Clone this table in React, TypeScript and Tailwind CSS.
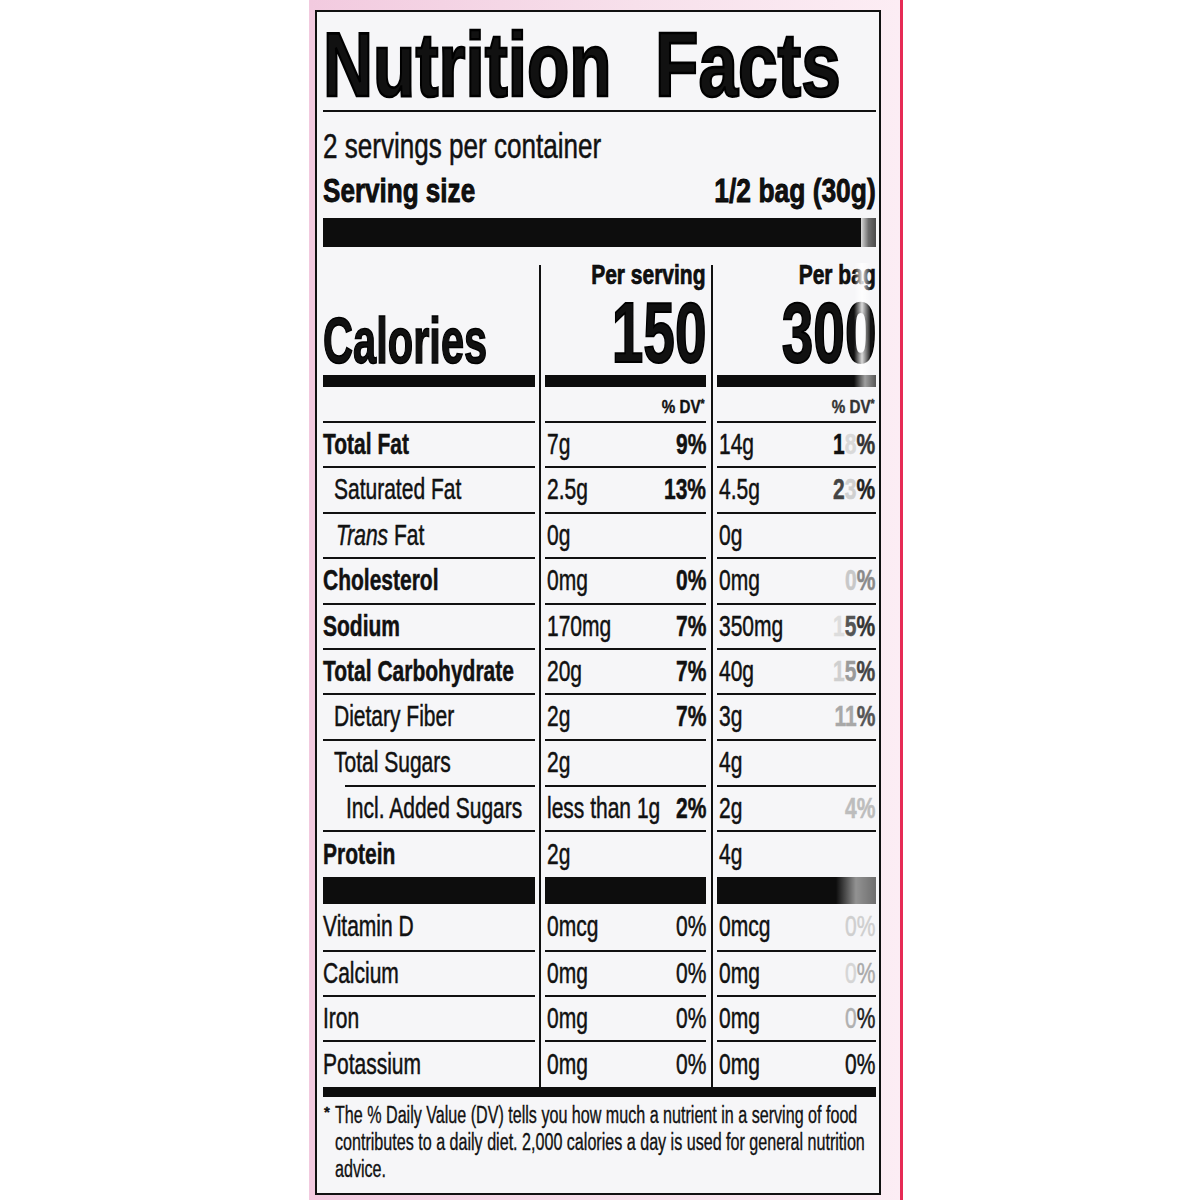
import React from "react";

type Part = [string, string];
interface Row {
  label: React.ReactNode;
  bold?: boolean;
  ind?: string;
  a: string;
  p?: string;
  b: string;
  q?: Part[];
  h: string;
  line?: boolean;
  lineInd?: string;
  pb?: boolean;
}

const K = "#111111";

const rows: Row[] = [
  { label: "Total Fat", bold: true, a: "7g", p: "9%", b: "14g", q: [["1", K], ["8", "#d9d9d9"], ["%", "#333333"]], h: "h-[45px]", line: true, pb: true },
  { label: "Saturated Fat", ind: "pl-[11px]", a: "2.5g", p: "13%", b: "4.5g", q: [["2", "#444444"], ["3", "#d0d0d0"], ["%", "#222222"]], h: "h-[46px]", line: true, pb: true },
  { label: (<><i>Trans</i> Fat</>), ind: "pl-[13px]", a: "0g", b: "0g", h: "h-[45px]", line: true },
  { label: "Cholesterol", bold: true, a: "0mg", p: "0%", b: "0mg", q: [["0", "#c8c8c8"], ["%", "#8a8a8a"]], h: "h-[46px]", line: true, pb: true },
  { label: "Sodium", bold: true, a: "170mg", p: "7%", b: "350mg", q: [["1", "#dddddd"], ["5", "#555555"], ["%", "#333333"]], h: "h-[45px]", line: true, pb: true },
  { label: "Total Carbohydrate", bold: true, a: "20g", p: "7%", b: "40g", q: [["1", "#cfcfcf"], ["5", "#9a9a9a"], ["%", "#444444"]], h: "h-[45px]", line: true, pb: true },
  { label: "Dietary Fiber", ind: "pl-[11px]", a: "2g", p: "7%", b: "3g", q: [["11", "#a8a8a8"], ["%", "#555555"]], h: "h-[46px]", line: true, pb: true },
  { label: "Total Sugars", ind: "pl-[11px]", a: "2g", b: "4g", h: "h-[46px]", line: true, lineInd: "ml-[22px]" },
  { label: "Incl. Added Sugars", ind: "pl-[23px]", a: "less than 1g", p: "2%", b: "2g", q: [["4%", "#bdbdbd"]], h: "h-[45px]", line: true, pb: true },
  { label: "Protein", bold: true, a: "2g", b: "4g", h: "h-[45px]" },
];

const vits: Row[] = [
  { label: "Vitamin D", a: "0mcg", p: "0%", b: "0mcg", q: [["0%", "#cfcfcf"]], h: "h-[48px]", line: true },
  { label: "Calcium", a: "0mg", p: "0%", b: "0mg", q: [["0", "#d5d5d5"], ["%", "#aaaaaa"]], h: "h-[45px]", line: true },
  { label: "Iron", a: "0mg", p: "0%", b: "0mg", q: [["0", "#b0b0b0"], ["%", "#222222"]], h: "h-[45px]", line: true },
  { label: "Potassium", a: "0mg", p: "0%", b: "0mg", q: [["0%", K]], h: "h-[45px]" },
];

const LEFT = "inline-block w-0 whitespace-nowrap origin-left scale-x-[0.7] text-[30px] leading-none [-webkit-text-stroke:0.5px_currentColor]";
const RIGHT = "inline-block whitespace-nowrap origin-right scale-x-[0.7] text-[30px] leading-none [-webkit-text-stroke:0.5px_currentColor]";

function Cell({ r, idx }: { r: Row; idx: number }) {
  let content: React.ReactNode = null;
  if (idx === 0) {
    content = (
      <div className={`flex-1 flex items-center pb-[2px] ${r.ind ?? ""}`}>
        <span className={`${LEFT} ${r.bold ? "font-bold" : ""}`}>{r.label}</span>
      </div>
    );
  } else if (idx === 1) {
    content = (
      <div className="flex-1 flex items-center justify-between pb-[2px] pl-[2px]">
        <span className={LEFT}>{r.a}</span>
        {r.p && <span className={`${RIGHT} ${r.pb ? "font-bold" : ""}`}>{r.p}</span>}
      </div>
    );
  } else {
    content = (
      <div className="flex-1 flex items-center justify-between pb-[2px] pl-[2px] pr-[1px]">
        <span className={LEFT}>{r.b}</span>
        {r.q && (
          <span className={`${RIGHT} ${r.pb ? "font-bold" : ""}`}>
            {r.q.map(([t, c], i) => (
              <span key={i} style={{ color: c }}>{t}</span>
            ))}
          </span>
        )}
      </div>
    );
  }
  return (
    <div className={`${r.h} flex flex-col`}>
      {content}
      {r.line && <div className={`h-[2px] bg-[#111111] ${idx === 0 ? r.lineInd ?? "" : ""}`} />}
    </div>
  );
}

function Column({ idx }: { idx: number }) {
  const w = idx === 0 ? "w-[212px]" : idx === 1 ? "w-[161px]" : "w-[159px]";
  return (
    <div className={`${w} flex flex-col`}>
      {idx === 0 ? (
        <div className="h-[110px] flex items-end pb-[2px]">
          <span className="inline-block w-0 whitespace-nowrap origin-left scale-x-[0.64] text-[65px] leading-none font-bold [-webkit-text-stroke:1.6px_#000]">Calories</span>
        </div>
      ) : (
        <div className="relative h-[110px] flex flex-col items-end justify-between">
          <span className="-mt-[4px] inline-block whitespace-nowrap origin-right scale-x-[0.75] text-[28px] leading-none font-bold [-webkit-text-stroke:0.7px_#000]">
            {idx === 1 ? "Per serving" : "Per bag"}
          </span>
          <span className="mb-[8px] inline-block whitespace-nowrap origin-right scale-x-[0.66] text-[86px] leading-[70px] font-bold [-webkit-text-stroke:2px_#000]">
            {idx === 1 ? "150" : "300"}
          </span>
          {idx === 2 && (
            <div className="absolute right-[6px] top-[-2px] w-[16px] h-[124px] bg-linear-to-r from-white/0 via-white/85 to-white/10" />
          )}
        </div>
      )}
      <div className="relative h-[12px] bg-[#0d0d0d]">
        {idx === 2 && <div className="absolute right-0 top-0 h-full w-[22px] bg-linear-to-r from-white/0 via-white/60 to-white/30" />}
      </div>
      <div className="h-[36px] flex flex-col">
        <div className="flex-1 flex items-end justify-end pb-[5px] pr-[1px]">
          {idx > 0 && (
            <span className={`inline-block whitespace-nowrap origin-right scale-x-[0.8] text-[19px] leading-none font-bold [-webkit-text-stroke:0.4px_currentColor] ${idx === 2 ? "text-[#333333]" : ""}`}>
              % DV<span className="text-[13px] align-top">*</span>
            </span>
          )}
        </div>
        <div className="h-[2px] bg-[#111111]" />
      </div>
      {rows.map((r, i) => (
        <Cell key={i} r={r} idx={idx} />
      ))}
      <div className="relative h-[27px] bg-[#0d0d0d]">
        {idx === 2 && <div className="absolute right-0 top-0 h-full w-[40px] bg-linear-to-r from-white/0 via-white/55 to-white/40" />}
      </div>
      {vits.map((r, i) => (
        <Cell key={i} r={r} idx={idx} />
      ))}
    </div>
  );
}

export default function App() {
  return (
    <div className="w-[1200px] h-[1200px] bg-white flex font-['Liberation_Sans',Arial,sans-serif] text-[#111111]">
      <div className="ml-[309px] w-[594px] h-full bg-[linear-gradient(90deg,#f2cadf,#f7e0eb_55%,#fcedf4)] border-r-[3px] border-r-[#e62a55] pl-[6px] pt-[10px]">
        <div className="w-[566px] h-[1185px] border-2 border-[#111111] bg-[#f6f6f8] pl-[6px] pr-[3px] pt-[8px] flex flex-col">
          <div className="h-[90px] flex">
            <span className="inline-block w-0 whitespace-nowrap origin-left scale-x-[0.77] text-[90px] leading-none font-bold [-webkit-text-stroke:2.6px_#000]">Nutrition</span>
            <span className="ml-[332px] inline-block w-0 whitespace-nowrap origin-left scale-x-[0.79] text-[90px] leading-none font-bold [-webkit-text-stroke:2.6px_#000]">Facts</span>
          </div>
          <div className="h-[2px] bg-[#111111]" />
          <div className="mt-[16px] h-[35px] flex">
            <span className="inline-block w-0 whitespace-nowrap origin-left scale-x-[0.745] text-[35px] leading-none [-webkit-text-stroke:0.5px_#111]">2 servings per container</span>
          </div>
          <div className="mt-[11px] h-[33px] flex justify-between">
            <span className="inline-block w-0 whitespace-nowrap origin-left scale-x-[0.79] text-[33px] leading-none font-bold [-webkit-text-stroke:0.8px_#000]">Serving size</span>
            <span className="inline-block whitespace-nowrap origin-right scale-x-[0.8] text-[33px] leading-none font-bold [-webkit-text-stroke:0.8px_#000]">1/2 bag (30g)</span>
          </div>
          <div className="relative mt-[11px] h-[29px] bg-[#0d0d0d]">
            <div className="absolute right-0 top-0 h-full w-[15px] bg-linear-to-r from-white/85 via-white/40 to-white/25" />
          </div>
          <div className="mt-[18px] flex">
            <Column idx={0} />
            <div className="ml-[4px] mr-[4px] w-[2px] bg-[#111111]" />
            <Column idx={1} />
            <div className="ml-[5px] mr-[4px] w-[2px] bg-[#111111]" />
            <Column idx={2} />
          </div>
          <div className="h-[10px] bg-[#0d0d0d]" />
          <div className="mt-[5px] flex text-[23px] leading-[27px] [-webkit-text-stroke:0.35px_#111]">
            <span className="w-[12px] pl-[1px] text-[15px] leading-[20px] font-bold">*</span>
            <div className="flex flex-col">
              <span className="block w-0 whitespace-nowrap origin-left scale-x-[0.7]">The % Daily Value (DV) tells you how much a nutrient in a serving of food</span>
              <span className="block w-0 whitespace-nowrap origin-left scale-x-[0.7]">contributes to a daily diet. 2,000 calories a day is used for general nutrition</span>
              <span className="block w-0 whitespace-nowrap origin-left scale-x-[0.7]">advice.</span>
            </div>
          </div>
        </div>
      </div>
    </div>
  );
}
